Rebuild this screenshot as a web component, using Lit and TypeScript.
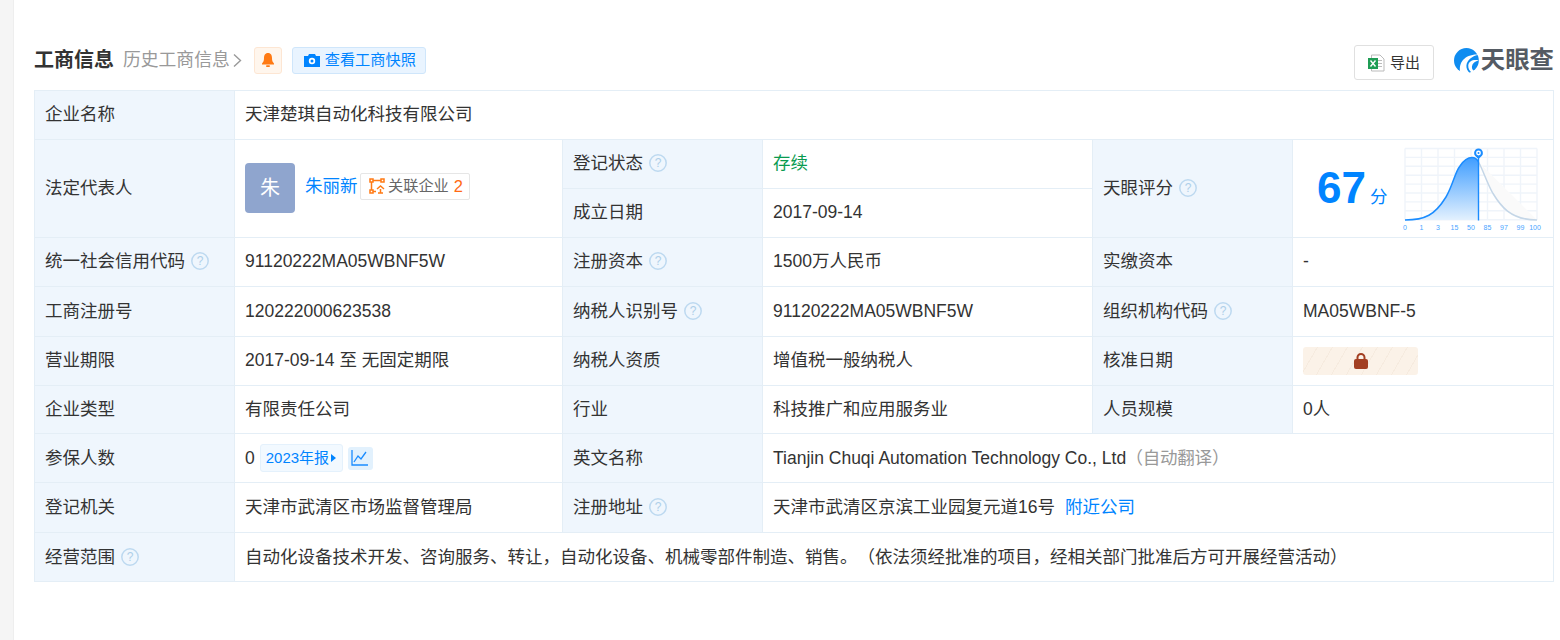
import { LitElement, html, css, svg } from "lit";
import { customElement } from "lit/decorators.js";

const q = html`<svg class="q" viewBox="0 0 18 18"><circle cx="9" cy="9" r="8.2" fill="none" stroke="#bdd9f0" stroke-width="1.5"/><text x="9" y="13.2" text-anchor="middle" font-size="12" fill="#aecfe9" font-family="Liberation Sans">?</text></svg>`;

const xs = [0, 1, 3, 15, 50, 85, 97, 99, 100];

@customElement("app-root")
export class AppRoot extends LitElement {
  static styles = css`
    :host { display: block; width: 1560px; height: 640px; overflow: hidden; background: #fff;
      font-family: "Liberation Sans", "Noto Sans CJK SC", sans-serif; font-size: 17.5px; line-height: 22px; color: #333; text-spacing-trim: space-all; }
    .page { display: flex; height: 640px; }
    .strip { width: 13px; background: #f5f5f5; border-right: 1px solid #eee; flex: none; }
    .main { flex: 1; padding: 45px 6px 0 20px; min-width: 0; }
    .head { display: flex; align-items: flex-start; height: 35px; margin-bottom: 10px; }
    .left { display: flex; align-items: center; height: 30px; }
    .title { font-size: 20px; font-weight: 700; color: #333; }
    .hist { color: #999; font-size: 17.8px; margin-left: 9px; display: flex; align-items: center; gap: 2px; }
    .bell { width: 28px; height: 27px; box-sizing: border-box; border: 1px solid #fde6d3; background: #fff6ed; border-radius: 3px; margin-left: 12px;
      display: flex; align-items: center; justify-content: center; }
    .snap { height: 27px; box-sizing: border-box; width: 134px; margin-left: 10px; background: #e9f4ff; border: 1px solid #cfe6fb; border-radius: 3px;
      display: flex; align-items: center; gap: 4px; padding-left: 10px; color: #0084ff; font-size: 15.2px; white-space: nowrap; }
    .spacer { flex: 1; }
    .export { width: 80px; height: 35px; box-sizing: border-box; border: 1px solid #e0e0e0; border-radius: 3px; display: flex; align-items: center; justify-content: center; gap: 5px; font-size: 15px; color: #333; }
    .logo { margin-left: 20px; display: flex; align-items: center; height: 30px; gap: 2px; width: 100px; font-size: 24.4px; font-weight: 700; color: #555b63; line-height: 1; white-space: nowrap; }
    table { border-collapse: collapse; table-layout: fixed; width: 1519px; }
    td { border: 1px solid #e4eef6; padding: 0 10px 2px; vertical-align: middle; white-space: nowrap; box-sizing: border-box; }
    tr.np td, td.np { padding-bottom: 0; }
    td.l { background: #eff6fd; }
    .h49 { height: 49px; } .h50 { height: 50px; } .h48 { height: 48px; }
    .lab { display: flex; align-items: center; gap: 6px; }
    .q { width: 18px; height: 18px; flex: none; }
    .rep { display: flex; align-items: flex-start; gap: 10px; height: 50px; }
    .ava { width: 50px; height: 50px; background: #8fa5ce; color: #fff; border-radius: 4px; display: flex; align-items: center; justify-content: center; font-size: 20px; flex: none; }
    .name { color: #0084ff; margin-top: 12px; display: block; }
    .rel { margin-left: -7.5px; margin-top: 10px; height: 27px; box-sizing: border-box; width: 110px; border: 1px solid #e6e6e6; border-radius: 2px; display: flex; align-items: center; padding-left: 8px; gap: 3px; font-size: 15.2px; color: #666; }
    .rel b { font-weight: 400; font-size: 16.5px; color: #ff6a13; margin-left: 2px; }
    .green { color: #0a9b50; }
    td.score { padding: 0; }
    .scorein { display: flex; align-items: center; height: 97px; }
    .num { color: #0084ff; font-size: 44px; font-weight: 700; margin-left: 24px; line-height: 1; margin-top: -2px; }
    .fen { color: #0084ff; margin-left: 4px; margin-top: 16px; }
    .chart { width: 145px; height: 88px; margin-left: 12.5px; flex: none; }
    .lock { width: 115px; height: 28px; border-radius: 3px; display: flex; align-items: center; justify-content: center;
      background: repeating-linear-gradient(120deg, #fbf2e8 0 12px, #f6ebdf 12px 13px); }
    .inline { display: flex; align-items: center; }
    .tag { height: 28px; box-sizing: border-box; width: 83px; margin-left: 5px; background: #f2f9ff; border: 1px solid #e4f1fc; border-radius: 3px; color: #0084ff; font-size: 15px;
      display: flex; align-items: center; padding-left: 5px; white-space: nowrap; }
    .tri { width: 0; height: 0; border-left: 5px solid #0084ff; border-top: 4px solid transparent; border-bottom: 4px solid transparent; margin-left: 2px; }
    .trend { width: 25px; height: 23px; background: #e2f1fd; border-radius: 3px; margin-left: 5px; display: flex; align-items: center; justify-content: center; }
    .link { color: #0084ff; margin-left: 10px; }
    .muted { color: #999; margin-left: 8px; font-feature-settings: "halt"; letter-spacing: -0.2px; }
  `;

  chart() {
    const W = 132;
    return html`<svg class="chart" viewBox="-5 0 145 88">
      <defs><linearGradient id="g" x1="0" y1="0" x2="0" y2="1"><stop offset="0" stop-color="#3f9dff"/><stop offset="1" stop-color="#e3f1fe"/></linearGradient></defs>
      ${[0, 1, 2, 3, 4, 5, 6, 7, 8].map((i) => svg`<line x1="${i * 16.5}" x2="${i * 16.5}" y1="3.5" y2="75" stroke="#eff4fa" stroke-width="1.4"/>`)}
      ${[0, 1, 2, 3, 4, 5, 6, 7, 8].map((i) => svg`<line x1="0" x2="${W}" y1="${3.5 + i * 8.9}" y2="${3.5 + i * 8.9}" stroke="#eff4fa" stroke-width="1.4"/>`)}
      <path d="M73.5 17 C78 25 82 38 88 48.5 C95 60 105 75 132 75 Z" fill="#fafafa"/>
      <path d="M0 75 C20 75 30 70 41 52 C48 40 50 27 55 21 C59 15 63 12.5 67 12.5 C70 12.5 72 14 73.5 17 L73.5 75 Z" fill="url(#g)"/>
      <path d="M73.5 17 C78 25 82 38 88 48.5 C95 60 105 75 132 75" fill="none" stroke="#c4d6e7" stroke-width="1.5"/>
      <path d="M0 75 C20 75 30 70 41 52 C48 40 50 27 55 21 C59 15 63 12.5 67 12.5 C70 12.5 72 14 73.5 17" fill="none" stroke="#1a8cff" stroke-width="1.5"/>
      <line x1="73.5" x2="73.5" y1="12" y2="75.5" stroke="#1a8cff" stroke-width="1.4"/>
      <path d="M73.5 14 L70.3 11 A4.4 4.4 0 1 1 76.7 11 Z" fill="#1a8cff"/><circle cx="73.5" cy="8" r="2.4" fill="#fff"/><circle cx="73.5" cy="8" r="1" fill="#1a8cff"/>
      ${xs.map((x, i) => svg`<text x="${i === 8 ? 130 : i * 16.5}" y="85" text-anchor="middle" font-size="7" fill="#4aa5ff" font-family="Liberation Sans">${x}</text>`)}
    </svg>`;
  }

  render() {
    return html`<div class="page">
      <div class="strip"></div>
      <div class="main">
        <div class="head">
          <div class="left">
            <span class="title">工商信息</span>
            <span class="hist">历史工商信息<svg width="10" height="15" viewBox="0 0 10 15"><path d="M2 1.5 8.5 7.5 2 13.5" fill="none" stroke="#999" stroke-width="1.4"/></svg></span>
            <span class="bell"><svg width="14" height="16" viewBox="0 0 14 16"><path d="M7 1C4 1 3 3.5 3 6C3 8.5 2.5 10 1 11.5V12.5H13V11.5C11.5 10 11 8.5 11 6C11 3.5 10 1 7 1Z" fill="#ff7a14"/><rect x="5" y="13.2" width="4" height="1.8" rx=".9" fill="#ff7a14"/></svg></span>
            <span class="snap"><svg width="18" height="15" viewBox="0 0 18 15"><path d="M1 3H5L6 1H12L13 3H17V14H1Z" fill="#0084ff"/><circle cx="9" cy="8" r="3.2" fill="#fff"/><circle cx="9" cy="8" r="1.5" fill="#0084ff"/></svg>查看工商快照</span>
          </div>
          <span class="spacer"></span>
          <span class="export"><svg width="17" height="18" viewBox="0 0 17 18"><path d="M3.5 1H12L16 5V17H3.5Z" fill="#fff" stroke="#bbb"/><rect x="10" y="6" width="4" height="1" fill="#bbb"/><rect x="10" y="9" width="4" height="1" fill="#bbb"/><rect x="10" y="12" width="4" height="1" fill="#bbb"/><rect x="0" y="4" width="10" height="11" fill="#1f9d55"/><path d="M2.5 6.5 7.5 12.5M7.5 6.5 2.5 12.5" stroke="#fff" stroke-width="1.4"/></svg>导出</span>
          <span class="logo"><svg width="25" height="25" viewBox="0 0 27 27"><circle cx="13.5" cy="13.5" r="13.5" fill="#0f8cf0"/><path d="M7 27C4 16 12 6 27 7C20 8.500 14 13 13.500 19C13.300 22 14.500 25 17 27Z" fill="#fff"/><path d="M15.500 19C16 14 21 12 27 13.500C23 14.500 20 16.500 19.500 20C19.300 22.500 20.500 24.500 23 25.500L20 27C17 25.500 15.300 22.500 15.500 19Z" fill="#fff"/></svg>天眼查</span>
        </div>
        <table>
          <colgroup><col style="width:200px"><col style="width:328px"><col style="width:200px"><col style="width:330px"><col style="width:200px"><col style="width:261px"></colgroup>
          <tr class="h49"><td class="l">企业名称</td><td colspan="5">天津楚琪自动化科技有限公司</td></tr>
          <tr class="h49">
            <td class="l" rowspan="2">法定代表人</td>
            <td rowspan="2"><div class="rep"><span class="ava">朱</span><span class="name">朱丽新</span>
              <span class="rel"><svg width="16" height="16" viewBox="0 0 16 16"><g fill="none" stroke="#ff7a14" stroke-width="1.5"><rect x="1" y="1" width="3" height="3"/><rect x="12" y="1" width="3" height="3"/><rect x="1" y="12" width="3" height="3"/><path d="M4 2.500H12M2.500 4V12M4 13.500H7"/><path d="M8 11 11.500 8 15 11M9 15H14M11.500 11V15"/></g></svg>关联企业<b>2</b></span></div></td>
            <td class="l"><span class="lab">登记状态${q}</span></td><td class="green">存续</td>
            <td class="l" rowspan="2"><span class="lab">天眼评分${q}</span></td>
            <td class="score" rowspan="2"><div class="scorein"><span class="num">67</span><span class="fen">分</span>${this.chart()}</div></td>
          </tr>
          <tr class="h49"><td class="l">成立日期</td><td>2017-09-14</td></tr>
          <tr class="h49"><td class="l"><span class="lab">统一社会信用代码${q}</span></td><td>91120222MA05WBNF5W</td><td class="l"><span class="lab">注册资本${q}</span></td><td>1500万人民币</td><td class="l">实缴资本</td><td>-</td></tr>
          <tr class="h50"><td class="l">工商注册号</td><td>120222000623538</td><td class="l"><span class="lab">纳税人识别号${q}</span></td><td>91120222MA05WBNF5W</td><td class="l"><span class="lab">组织机构代码${q}</span></td><td>MA05WBNF-5</td></tr>
          <tr class="h49"><td class="l">营业期限</td><td>2017-09-14 至 无固定期限</td><td class="l">纳税人资质</td><td>增值税一般纳税人</td><td class="l">核准日期</td><td class="np"><div class="lock"><svg width="16" height="18" viewBox="0 0 16 18"><path d="M4.500 8V5.500a3.500 3.500 0 0 1 7 0V8" fill="none" stroke="#a33f22" stroke-width="2"/><rect x="1" y="7" width="14" height="10" rx="2" fill="#a33f22"/></svg></div></td></tr>
          <tr class="h48"><td class="l">企业类型</td><td>有限责任公司</td><td class="l">行业</td><td>科技推广和应用服务业</td><td class="l">人员规模</td><td>0人</td></tr>
          <tr class="h49 np"><td class="l">参保人数</td><td><div class="inline">0<span class="tag">2023年报<span class="tri"></span></span><span class="trend"><svg width="18" height="18" viewBox="0 0 18 18"><path d="M1 1V16H17" fill="none" stroke="#1a8cff" stroke-width="1.3"/><path d="M3 13 7 7 10 10 15 3" fill="none" stroke="#1a8cff" stroke-width="1.3"/></svg></span></div></td><td class="l">英文名称</td><td colspan="3">Tianjin Chuqi Automation Technology Co., Ltd<span class="muted">（自动翻译）</span></td></tr>
          <tr class="h50"><td class="l">登记机关</td><td>天津市武清区市场监督管理局</td><td class="l"><span class="lab">注册地址${q}</span></td><td colspan="3">天津市武清区京滨工业园复元道16号<span class="link">附近公司</span></td></tr>
          <tr class="h49 np"><td class="l"><span class="lab">经营范围${q}</span></td><td colspan="5">自动化设备技术开发、咨询服务、转让，自动化设备、机械零部件制造、销售。（依法须经批准的项目，经相关部门批准后方可开展经营活动）</td></tr>
        </table>
      </div>
    </div>`;
  }
}
